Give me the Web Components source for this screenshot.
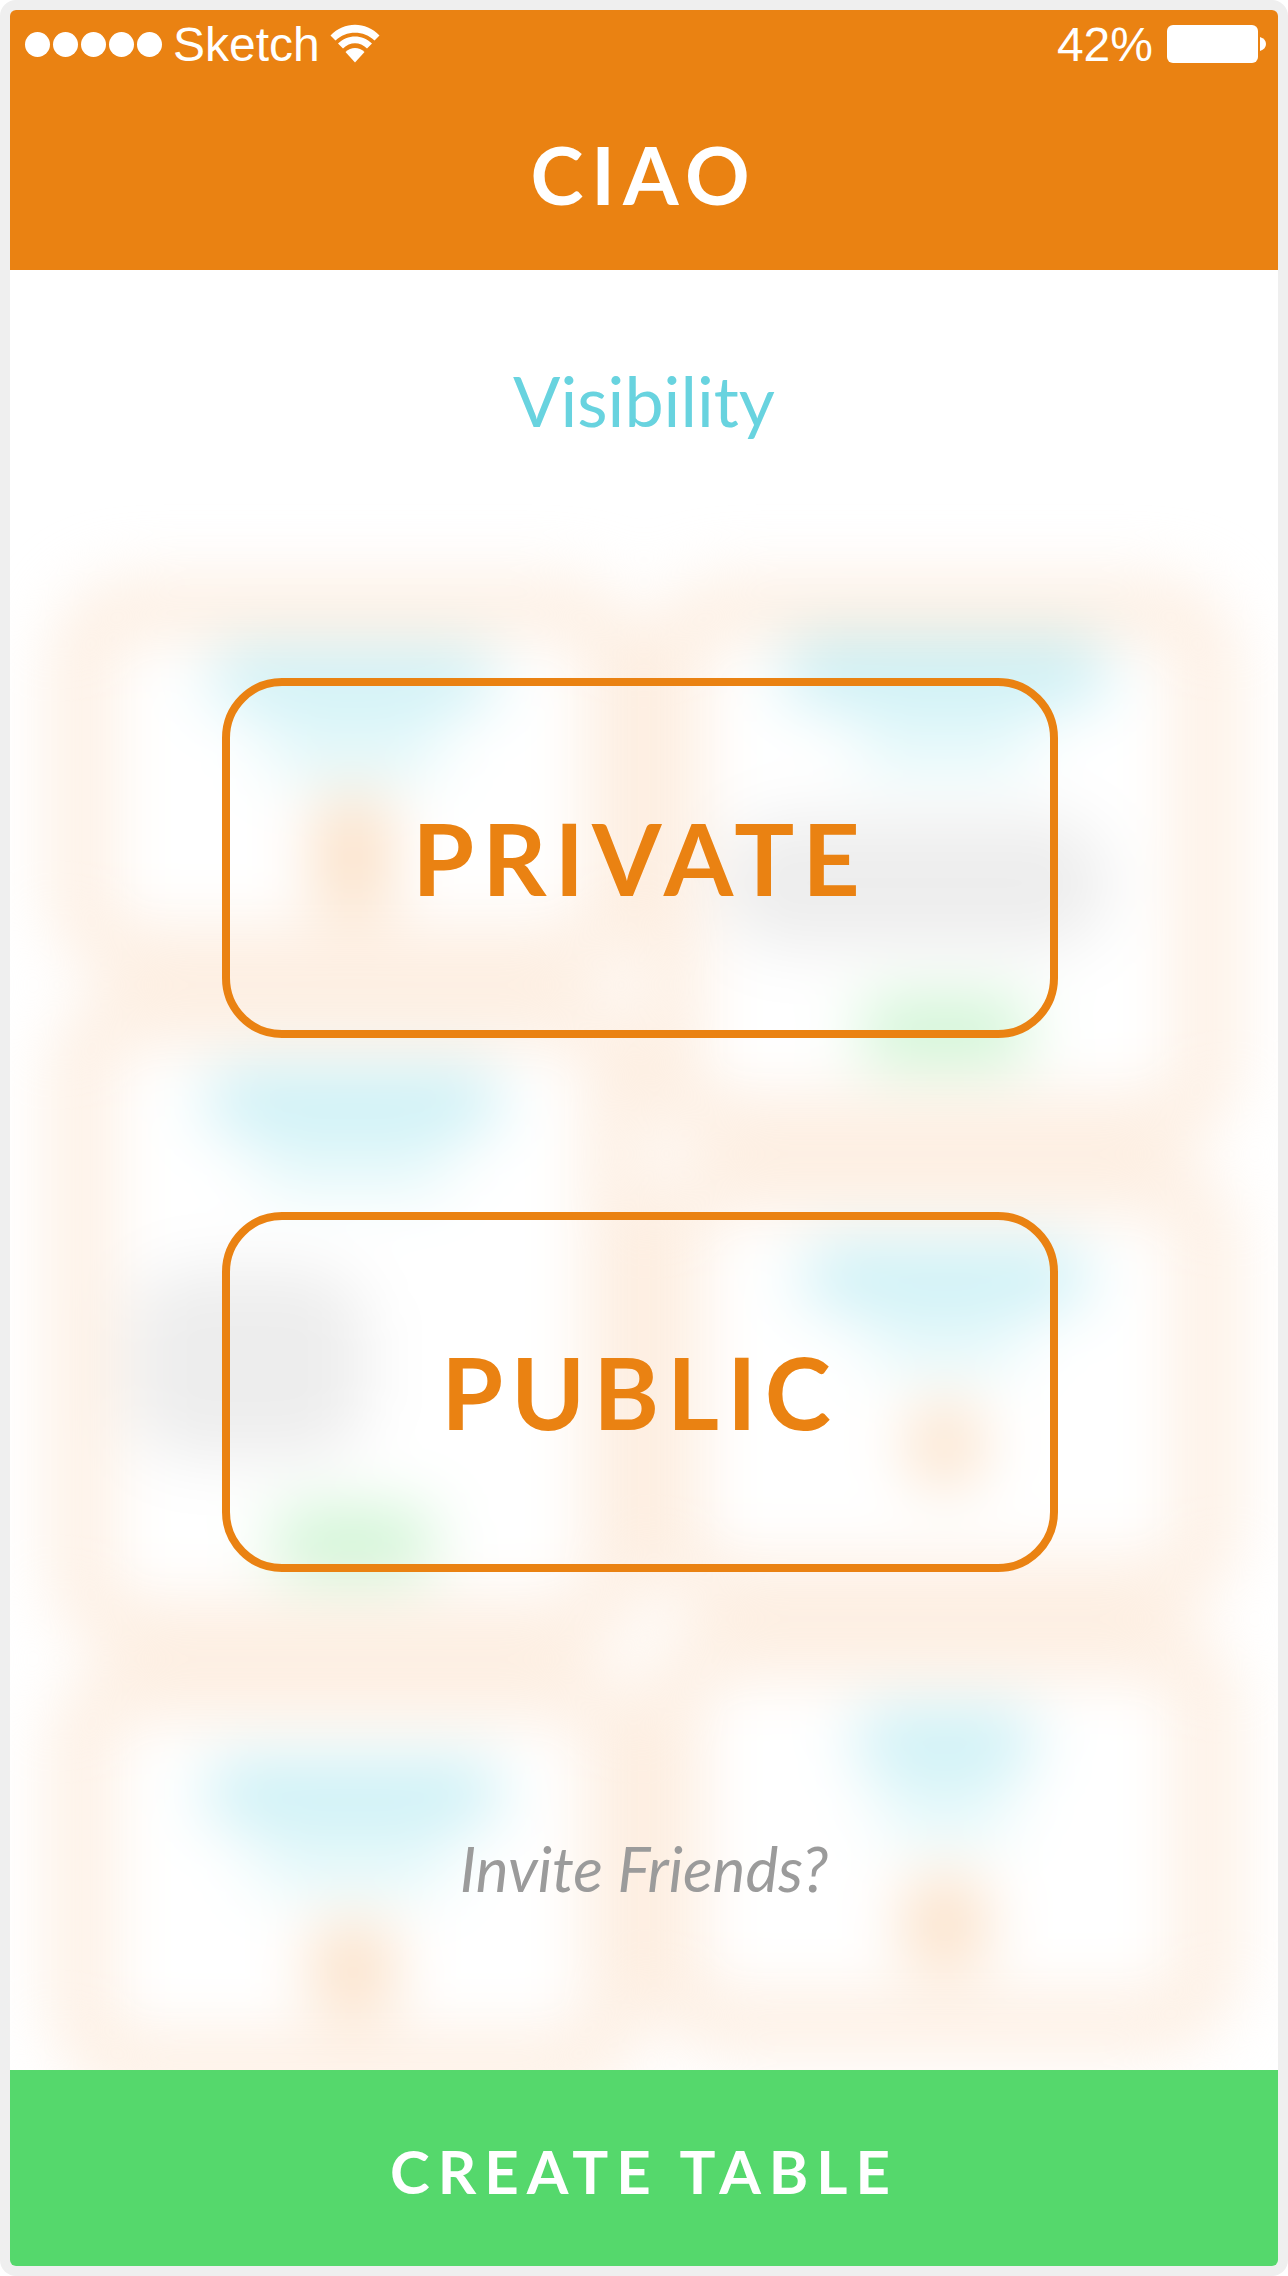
<!DOCTYPE html>
<html lang="en">
<head>
<meta charset="utf-8">
<meta name="viewport" content="width=device-width, initial-scale=1">
<title>Ciao</title>
<style>
  html { background: #fff; }
  body { margin: 0; font-family: Lato, "Open Sans", sans-serif; }
</style>
</head>
<body>
<ciao-screen>
  <status-bar slot="top" carrier="Sketch" charge="42%"></status-bar>
  <title-bar slot="top">CIAO</title-bar>
  <table-wall slot="wall"></table-wall>
  <visibility-picker>
    <span slot="title">Visibility</span>
    <choice-button>PRIVATE</choice-button>
    <choice-button>PUBLIC</choice-button>
    <invite-link slot="invite">Invite Friends?</invite-link>
  </visibility-picker>
  <action-bar slot="bottom">CREATE TABLE</action-bar>
</ciao-screen>

<script>
const define = (name, html, setup) => {
  const template = document.createElement('template');
  template.innerHTML = html;
  customElements.define(name, class extends HTMLElement {
    constructor() {
      super();
      this.attachShadow({ mode: 'open' }).append(template.content.cloneNode(true));
    }
    connectedCallback() { if (setup) setup(this, this.shadowRoot); }
  });
};

define('ciao-screen', `
  <style>
    :host { display: flex; box-sizing: border-box; min-height: 100vh; padding: 10px; background: #efefef; border-radius: 16px;
      --orange: #ea8212; --green: #55d86c; --aqua: #68d3df; --grey: #9b9b9b; --tracking: 8px; }
    .screen { flex: 1; display: flex; flex-direction: column; min-width: 0; overflow: hidden; border-radius: 6px; background: #fff; }
    header { background: var(--orange); color: #fff; }
    main { flex: 1; display: grid; overflow: hidden; }
    main > * { grid-area: 1 / 1; min-width: 0; }
    .wall { height: 0; min-height: 100%; }
    .front { position: relative; }
  </style>
  <div class="screen">
    <header><slot name="top"></slot></header>
    <main>
      <div class="wall" aria-hidden="true"><slot name="wall"></slot></div>
      <div class="front"><slot></slot></div>
    </main>
    <footer><slot name="bottom"></slot></footer>
  </div>`);

define('status-bar', `
  <style>
    :host { display: flex; justify-content: space-between; align-items: center; padding: 6px 11px 0 15px;
      font: 48px/54px "Liberation Sans", Arial, sans-serif; }
    div { display: flex; align-items: center; }
    .dots { gap: 3px; margin-right: 11px; }
    .dots i { width: 25px; height: 25px; border-radius: 50%; background: #fff; }
    span { padding-top: 2px; }
    svg { display: block; fill: #fff; }
    .wifi { margin-left: 10px; }
    .battery { margin-left: 14px; }
  </style>
  <div>
    <div class="dots"><i></i><i></i><i></i><i></i><i></i></div>
    <span class="carrier"></span>
    <svg class="wifi" width="50" height="40" viewBox="0 0 50 40">
      <path d="M0.500 11.500C14 -3 36 -3 49.500 11.500L44.500 16.500C34 6 16 6 5.500 16.500Z"/>
      <path d="M8 19.500C17.500 10 32.500 10 42 19.500L37 24.500C30 17.500 20 17.500 13 24.500Z"/>
      <path d="M15.500 28C21 22.800 29 22.800 34.500 28L25 38.500Z"/>
    </svg>
  </div>
  <div>
    <span class="charge"></span>
    <svg class="battery" width="100" height="40" viewBox="0 0 100 40">
      <rect x="0" y="1" width="91" height="38" rx="6"/>
      <path d="M93 13Q99 15 99 20Q99 25 93 27Z"/>
    </svg>
  </div>`, (el, root) => {
    root.querySelector('.carrier').textContent = el.getAttribute('carrier');
    root.querySelector('.charge').textContent = el.getAttribute('charge');
  });

define('title-bar', `
  <style>
    :host { display: block; padding: 54px 0 48px; text-align: center; }
    h1 { margin: 0; font-size: 80px; line-height: 96px; font-weight: 700; letter-spacing: var(--tracking); }
  </style>
  <h1><slot></slot></h1>`);

define('visibility-picker', `
  <style>
    :host { display: flex; flex-direction: column; align-items: center; padding-top: 88px; }
    h2 { margin: 0; font-size: 70px; line-height: 84px; font-weight: 400; color: var(--aqua); }
    .choices { display: flex; flex-direction: column; gap: 174px; width: 66%; margin: 236px 8px 259px 0; }
  </style>
  <h2><slot name="title"></slot></h2>
  <div class="choices"><slot></slot></div>
  <slot name="invite"></slot>`);

define('choice-button', `
  <style>
    :host { display: block; }
    button { display: block; box-sizing: border-box; width: 100%; padding: 111px 0 113px; border: 8px solid var(--orange); border-radius: 60px;
      background: none; color: var(--orange); font: 700 100px/120px Lato, sans-serif; letter-spacing: var(--tracking); cursor: pointer; }
  </style>
  <button type="button"><slot></slot></button>`);

define('invite-link', `
  <style>
    :host { display: block; }
    a { display: block; font: italic 400 62px/74px Lato, "Open Sans", sans-serif; color: var(--grey); text-decoration: none; }
  </style>
  <a href="#invite"><slot></slot></a>`);

define('action-bar', `
  <style>
    :host { display: block; }
    button { display: block; width: 100%; padding: 65px 0 59px; border: 0; background: var(--green); color: #fff;
      font: 700 60px/72px Lato, sans-serif; letter-spacing: var(--tracking); cursor: pointer; }
  </style>
  <button type="button"><slot></slot></button>`);

/* One out-of-focus table card: a soft frame around a stack of tinted bars. */
define('table-card', `
  <style>
    :host { display: flex; flex-direction: column; align-items: center; box-sizing: border-box; padding-left: 10px;
      border: 54px solid #fdeddf; border-radius: 80px; background: #fff; }
    i { flex: none; border-radius: 24px; }
    .name { background: #c8eff5; }
    .sub { background: #dff7f9; }
    .seat { background: #fbe0c6; }
    .photo { background: #ededed; border-radius: 60px; }
    .go { background: #cdf4d2; }
    .start { align-self: flex-start; margin-left: 12px; }
  </style>`, (el, root) => {
    for (const bar of el.getAttribute('bars').split(';')) {
      const [kind, top, height, width] = bar.trim().split(/\s+/);
      const i = document.createElement('i');
      i.className = kind.replace('.', ' ');
      i.style.cssText = `margin-top:${top}px;height:${height}px;width:${width}%`;
      root.append(i);
    }
  });

define('table-wall', `
  <style>
    :host { display: grid; grid-template-columns: 1fr 1fr; gap: 4px; padding: 311px 44px 0; filter: blur(32px); }
    .column { display: flex; flex-direction: column; gap: 8px; }
    .s { height: 400px; } .m { height: 427px; } .n { height: 457px; } .l { height: 569px; } .xl { height: 666px; }
  </style>
  <div class="column">
    <table-card class="s" bars="name 16 56 60; sub 10 60 38; seat 18 120 16"></table-card>
    <table-card class="xl" bars="name 28 60 62; sub 8 50 42; photo.start 80 190 50; go 50 66 34"></table-card>
    <table-card class="m" bars="name 45 62 62; sub 10 55 42; seat 33 95 17"></table-card>
  </div>
  <div class="column">
    <table-card class="l" bars="name 4 66 68; sub 10 55 38; photo.start 48 130 82; go 50 66 36"></table-card>
    <table-card class="n" bars="name 35 60 60; sub 10 50 34; seat 35 85 14"></table-card>
    <table-card class="m" bars="name 34 60 38; sub 10 55 28; seat 40 95 17"></table-card>
  </div>`);
</script>
</body>
</html>
